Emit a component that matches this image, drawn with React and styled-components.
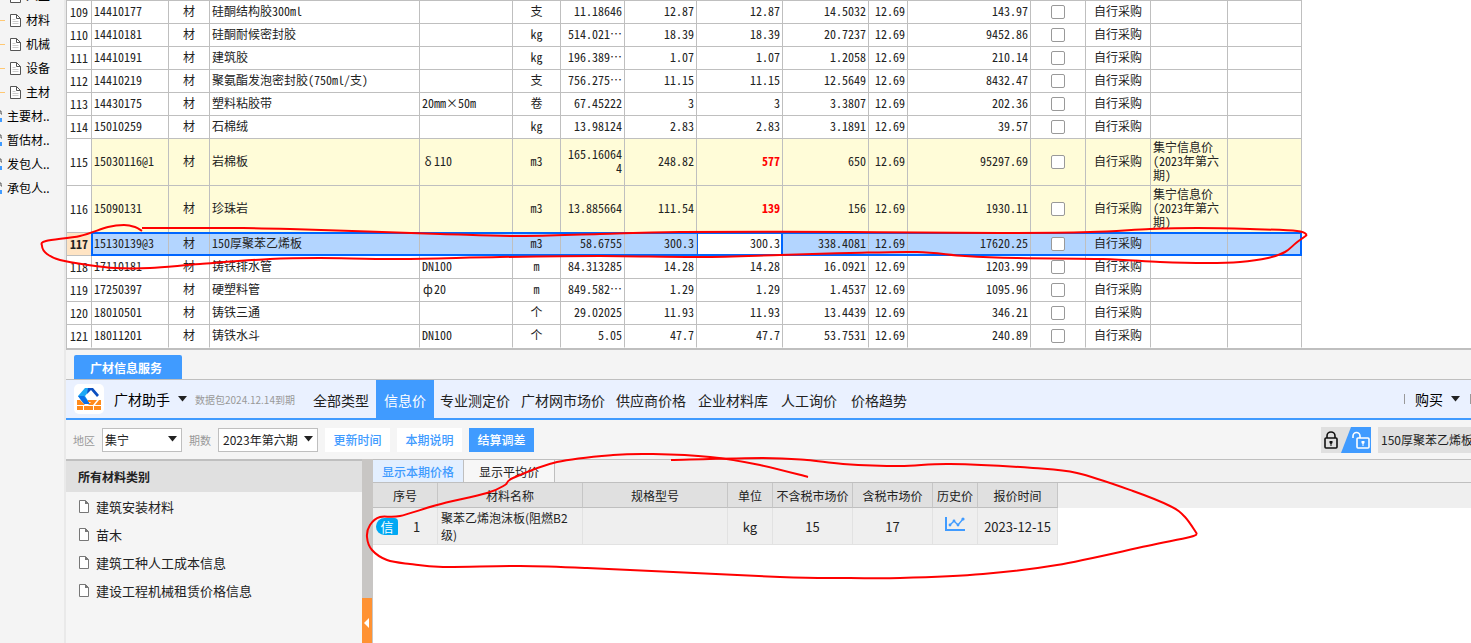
import { useState } from 'react'
import styled, { createGlobalStyle, css } from 'styled-components'

const GlobalStyle = createGlobalStyle`
* {
  box-sizing: border-box;
}
body {
  margin: 0;
  overflow: hidden;
  background: #fff;
  color: #222;
  font-family: 'Noto Sans CJK SC', sans-serif;
  font-size: 12px;
}
button, input, select {
  font: inherit;
  color: inherit;
}
`

const Page = styled.div`
  position: relative;
  display: flex;
  height: 100vh;
  overflow: hidden;
`

/* ---- left tree ---- */

const Sidebar = styled.nav`
  flex: 0 0 66px;
  overflow: hidden;
  background: #f4f4f4;
  border-right: 2px solid #e9e9e9;
`
const TreeList = styled.ul`
  list-style: none;
  margin: -16px 0 0;
  padding: 0;
`
const TreeItem = styled.li`
  display: flex;
  align-items: center;
  height: 24px;
  white-space: nowrap;
  color: #000;
`
const Branch = styled.span`
  width: 5px;
  height: 1px;
  margin-right: 5px;
  background: #ffc873;
`
const TreeLabel = styled.span`
  padding-left: ${props => props.$nested ? '5px' : '4px'};
  line-height: 24px;
`

/* ---- quantity sheet ---- */

const Main = styled.main`
  flex: 1;
  min-width: 0;
  display: flex;
  flex-direction: column;
`
const SheetPane = styled.section`
  overflow: hidden;
  border-bottom: 2px solid #bfbfbf;
`
const Sheet = styled.table`
  width: 1236px;
  table-layout: fixed;
  border-collapse: separate;
  border-spacing: 0;
  border-top: 1px solid #bfbfbf;
  border-left: 1px solid #bfbfbf;
  font-family: 'Noto Sans Mono CJK SC', 'Noto Sans CJK SC', monospace;
  line-height: 14px;
`
const selectedRow = css`
  position: relative;
  background: #b3d5ff;

  &::after {
    content: '';
    position: absolute;
    inset: -1px 0 0 24px;
    border: 2px solid #0066ff;
    pointer-events: none;
  }
`
const SheetRow = styled.tr`
  height: ${props => props.$tall ? '47px' : '23px'};
  background: ${props => props.$tall ? '#fffcd8' : '#fff'};
  ${props => props.$selected && selectedRow}

  &:last-child > * {
    border-bottom-color: transparent;
  }
`
const RowNumber = styled.th`
  padding: 0;
  border-right: 1px solid #bfbfbf;
  border-bottom: 1px solid #bfbfbf;
  background: ${props => props.$selected ? '#ffe4c4' : '#fff'};
  font-weight: ${props => props.$selected ? 'bold' : 'normal'};
`
const Cell = styled.td`
  padding: 0 2px 2px;
  border-right: 1px solid #bfbfbf;
  border-bottom: 1px solid #bfbfbf;
  text-align: ${props => props.$align || 'left'};
  word-break: ${props => props.$breakAll ? 'break-all' : 'normal'};
  ${props => props.$changed && css`
    color: #f00;
    font-weight: bold;
  `}
  ${props => props.$editing && css`
    background: #fff;
    border-right-color: #0066ff;
    box-shadow: inset 1px 0 #0066ff, inset -1px 0 #0066ff;
  `}
`
const WideGlyph = styled.span`
  display: inline-block;
  width: 12px;
  text-align: center;
`
const Tick = styled.input`
  appearance: none;
  display: block;
  width: 14px;
  height: 14px;
  margin: 2px auto 0;
  border: 1px solid #999;
  border-radius: 2px;
  background: #fff;

  &:checked {
    background: #409bff;
  }
`

/* ---- information service ---- */

const ServiceTabs = styled.div`
  display: flex;
  padding: 5px 8px 0;
  background: #f4f4f4;
  border-bottom: 1px solid #bfbfbf;
`
const ServiceTab = styled.button`
  width: 108px;
  height: 24px;
  padding: 0 4px 0 0;
  border: none;
  border-radius: 2px 2px 0 0;
  background: #409bff;
  color: #fff;
  font-weight: bold;
`
const HelperBar = styled.header`
  display: flex;
  align-items: center;
  height: 40px;
  flex-shrink: 0;
  padding-left: 8px;
  background: #eaf1ff;
  border-bottom: 2px solid #409bff;
  white-space: nowrap;
`
const LogoBox = styled.span`
  display: flex;
  width: 30px;
  height: 30px;
  margin-right: 10px;
  border-radius: 5px;
  background: #fff;
`
const MenuButton = styled.button`
  display: flex;
  align-items: center;
  gap: 8px;
  padding: 0;
  border: none;
  background: none;
  color: #000;
  font-size: 14px;
`
const Expiry = styled.span`
  margin: 0 11px 0 8px;
  color: #999;
  font-size: 10px;
`
const NavItem = styled.a`
  width: ${props => props.$chars * 12 + 22}px;
  height: 38px;
  line-height: 41px;
  text-align: center;
  text-decoration: none;
  font-size: 14px;
  color: ${props => props.$active ? '#fff' : '#222'};
  background: ${props => props.$active ? '#409bff' : 'transparent'};
`
const BuyArea = styled.div`
  display: flex;
  align-items: center;
  gap: 10px;
  margin-left: auto;
`
const Separator = styled.span`
  width: 1px;
  height: 10px;
  background: #999;
`

const FilterBar = styled.form`
  display: flex;
  align-items: center;
  height: 39px;
  flex-shrink: 0;
  padding-left: 7px;
  overflow: hidden;
  background: #f5f5f5;
  white-space: nowrap;
`
const FilterLabel = styled.label`
  display: flex;
  align-items: center;
  gap: 7px;
  margin-right: 7px;
  color: #999;
  font-size: 11px;
`
const SelectBox = styled.span`
  position: relative;
  width: ${props => props.$wide ? '100px' : '80px'};
  color: #222;
  font-size: 12px;

  svg {
    position: absolute;
    top: 8px;
    right: 5px;
    pointer-events: none;
  }
`
const Select = styled.select`
  appearance: none;
  display: block;
  width: 100%;
  height: 24px;
  padding: 0 0 0 ${props => props.$wide ? '4px' : '2px'};
  border: 1px solid #bfbfbf;
  border-radius: 0;
  background: #fff;
`
const FilterButton = styled.button`
  width: 65px;
  height: 24px;
  margin-right: 7px;
  padding: 0;
  border: none;
  background: ${props => props.$primary ? '#409bff' : '#fff'};
  color: ${props => props.$primary ? '#fff' : '#409bff'};
  font-weight: 500;
`
const SearchArea = styled.div`
  display: flex;
  gap: 7px;
  margin-left: auto;
`
const LockToggle = styled.button`
  display: flex;
  padding: 0;
  border: none;
  background: #e0e0e0;
`
const SearchInput = styled.input`
  width: 93px;
  height: 26px;
  padding: 0 0 0 3px;
  border: none;
  background: #e0e0e0;
`

const Body = styled.div`
  flex: 1;
  min-height: 0;
  display: flex;
`
const Categories = styled.aside`
  flex: 0 0 296px;
  background: #f5f5f5;
  border-top: 2px solid #bfbfbf;
`
const CategoryTitle = styled.h2`
  margin: 0;
  padding-left: 12px;
  background: #e0e0e0;
  font-size: 12px;
  line-height: 31px;
`
const CategoryList = styled.ul`
  list-style: none;
  margin: 0;
  padding: 0 0 0 12px;
`
const Category = styled.li`
  display: flex;
  align-items: center;
  gap: 6px;
  height: 28px;
  font-size: 13px;
`
const Splitter = styled.div`
  flex: 0 0 11px;
  display: flex;
  flex-direction: column;
  justify-content: flex-end;
  background: #c8c6c4;
`
const CollapseButton = styled.button`
  display: flex;
  align-items: center;
  width: 10px;
  height: 45px;
  padding: 5px 0 0 2px;
  border: none;
  background: #ff9233;
`

const Results = styled.section`
  flex: 1;
  min-width: 0;
  border-top: 1px solid #bfbfbf;
`
const PriceTabs = styled.div`
  display: flex;
  background: #f1f1f1;
  border-bottom: 1px solid #bfbfbf;
`
const PriceTab = styled.button`
  width: 91px;
  height: 22px;
  padding: 0;
  border: none;
  border-right: 1px solid #bfbfbf;
  background: ${props => props.$active ? '#e3efff' : '#f7f7f7'};
  color: ${props => props.$active ? '#409bff' : '#222'};
  font-weight: ${props => props.$active ? 500 : 400};
`
const PriceTableWrap = styled.div`
  background: linear-gradient(#efefef 25px, #fff 25px);
`
const PriceTable = styled.table`
  width: 685px;
  table-layout: fixed;
  border-collapse: separate;
  border-spacing: 0;
  line-height: 17px;

  th {
    height: 25px;
    padding: 0;
    background: #e0e0e0;
    border-right: 1px solid #c6c6c6;
    border-bottom: 1px solid #bfbfbf;
    font-weight: normal;
    white-space: nowrap;
  }
  td {
    height: 37px;
    padding: 0;
    background: #efefef;
    border-right: 1px solid #e2e2e2;
    border-bottom: 1px solid #e2e2e2;
    font-size: 13px;
    text-align: center;
  }
  td.name {
    padding-left: 3px;
    font-size: 12px;
    text-align: left;
  }
`
const IndexCell = styled.div`
  display: flex;
  align-items: center;
  gap: 15px;
  padding-left: 3px;
`
const SourceBadge = styled.span`
  width: 22px;
  height: 17px;
  border-radius: 9px 4px 1px 9px;
  background: #00a8f3;
  color: #fff;
`

const Annotations = styled.svg`
  position: absolute;
  top: 0;
  left: 0;
  pointer-events: none;
`

/* ---- data ---- */

const columns = [25, 77, 41, 210, 93, 48, 64, 72, 86, 86, 39, 123, 55, 65, 77, 74]

const source = '集宁信息价(2023年第六期)'

const materials = [
  { no: 109, code: '14410177', name: '硅酮结构胶300ml', spec: '', unit: '支', qty: '11.18646', budget: '12.87', market: '12.87', taxed: '14.5032', total: '143.97' },
  { no: 110, code: '14410181', name: '硅酮耐候密封胶', spec: '', unit: 'kg', qty: '514.021…', budget: '18.39', market: '18.39', taxed: '20.7237', total: '9452.86' },
  { no: 111, code: '14410191', name: '建筑胶', spec: '', unit: 'kg', qty: '196.389…', budget: '1.07', market: '1.07', taxed: '1.2058', total: '210.14' },
  { no: 112, code: '14410219', name: '聚氨酯发泡密封胶(750ml/支)', spec: '', unit: '支', qty: '756.275…', budget: '11.15', market: '11.15', taxed: '12.5649', total: '8432.47' },
  { no: 113, code: '14430175', name: '塑料粘胶带', spec: '20mm×50m', unit: '卷', qty: '67.45222', budget: '3', market: '3', taxed: '3.3807', total: '202.36' },
  { no: 114, code: '15010259', name: '石棉绒', spec: '', unit: 'kg', qty: '13.98124', budget: '2.83', market: '2.83', taxed: '3.1891', total: '39.57' },
  { no: 115, code: '15030116@1', name: '岩棉板', symbol: 'δ', spec: '110', unit: 'm3', qty: '165.160644', budget: '248.82', market: '577', taxed: '650', total: '95297.69', source },
  { no: 116, code: '15090131', name: '珍珠岩', spec: '', unit: 'm3', qty: '13.885664', budget: '111.54', market: '139', taxed: '156', total: '1930.11', source },
  { no: 117, code: '15130139@3', name: '150厚聚苯乙烯板', spec: '', unit: 'm3', qty: '58.6755', budget: '300.3', market: '300.3', taxed: '338.4081', total: '17620.25', selected: true },
  { no: 118, code: '17110181', name: '铸铁排水管', spec: 'DN100', unit: 'm', qty: '84.313285', budget: '14.28', market: '14.28', taxed: '16.0921', total: '1203.99' },
  { no: 119, code: '17250397', name: '硬塑料管', symbol: 'ф', spec: '20', unit: 'm', qty: '849.582…', budget: '1.29', market: '1.29', taxed: '1.4537', total: '1095.96' },
  { no: 120, code: '18010501', name: '铸铁三通', spec: '', unit: '个', qty: '29.02025', budget: '11.93', market: '11.93', taxed: '13.4439', total: '346.21' },
  { no: 121, code: '18011201', name: '铸铁水斗', spec: 'DN100', unit: '个', qty: '5.05', budget: '47.7', market: '47.7', taxed: '53.7531', total: '240.89' },
]

const tree = [
  { label: '人工', nested: true },
  { label: '材料', nested: true },
  { label: '机械', nested: true },
  { label: '设备', nested: true },
  { label: '主材', nested: true },
  { label: '主要材..' },
  { label: '暂估材..' },
  { label: '发包人..' },
  { label: '承包人..' },
]

const navItems = ['全部类型', '信息价', '专业测定价', '广材网市场价', '供应商价格', '企业材料库', '人工询价', '价格趋势']

const categories = ['建筑安装材料', '苗木', '建筑工种人工成本信息', '建设工程机械租赁价格信息']

const priceColumns = [
  ['序号', 65],
  ['材料名称', 145],
  ['规格型号', 145],
  ['单位', 45],
  ['不含税市场价', 80],
  ['含税市场价', 80],
  ['历史价', 45],
  ['报价时间', 80],
]

// freehand marks, as lists of points
const marks = [
  [[142, 231], [135, 227], [124, 225], [108, 227], [80, 236], [46, 241], [42, 246], [47, 254], [60, 260], [88, 265], [115, 268], [150, 268], [200, 264], [270, 259], [320, 258], [400, 259], [500, 257], [600, 256], [700, 257], [780, 255], [850, 253], [917, 252], [965, 256], [1017, 258], [1103, 259], [1160, 262], [1207, 263], [1240, 262], [1268, 258], [1285, 252], [1296, 243], [1307, 235]],
  [[142, 228], [233, 228], [290, 229], [440, 234], [520, 236], [600, 234], [680, 232], [850, 232], [1000, 233], [1090, 232], [1150, 229], [1197, 228], [1250, 229], [1297, 231], [1307, 235]],
  [[808, 477], [760, 465], [710, 457], [653, 454], [613, 455], [557, 462], [513, 478], [505, 485], [487, 493], [437, 505], [400, 516], [380, 517], [370, 525], [367, 537], [372, 550], [387, 560], [410, 564], [443, 567], [520, 566], [587, 568], [780, 577], [850, 578], [900, 578], [983, 574], [1057, 565], [1147, 546], [1190, 537], [1197, 534]],
  [[671, 460], [763, 458], [807, 460], [843, 464], [900, 466], [950, 464], [1033, 468], [1077, 473], [1133, 491], [1170, 506], [1185, 517], [1197, 534]],
]

const smoothPath = (points) => {
  let d = `M${points[0].join(' ')}`
  for (let i = 0; i < points.length - 1; i++) {
    const p0 = points[i - 1] || points[i]
    const p1 = points[i]
    const p2 = points[i + 1]
    const p3 = points[i + 2] || p2
    d += `C${p1[0] + (p2[0] - p0[0]) / 6} ${p1[1] + (p2[1] - p0[1]) / 6} ${p2[0] - (p3[0] - p1[0]) / 6} ${p2[1] - (p3[1] - p1[1]) / 6} ${p2[0]} ${p2[1]}`
  }
  return d
}

/* ---- icons ---- */

const Caret = () => (
  <svg width="9" height="6" viewBox="0 0 9 6"><path d="M0 0h9L4.5 5.500z" fill="#222" /></svg>
)

const TreePage = () => (
  <svg width="11" height="13" viewBox="0 0 11 13">
    <path d="M.5.5h6l4 4v8H.5z" fill="#fff" stroke="#555" />
    <path d="M6.500.5v4h4" fill="none" stroke="#555" />
    <path d="M2.500 5.500h3M2.500 7.500h6M2.500 9.500h6" stroke="#ccc" />
  </svg>
)

const TreeGroup = () => (
  <svg width="3" height="13" viewBox="0 0 3 13">
    <path d="M0 1h1v3h1" fill="none" stroke="#555" />
    <path d="M0 8h2v4H0z" fill="#409bff" />
  </svg>
)

const PageIcon = () => (
  <svg width="12" height="13" viewBox="0 0 12 13">
    <path d="M1.500.5h6l3 3v9h-9z" fill="#fff" stroke="#777" />
    <path d="M7 0v4h4z" fill="#777" />
  </svg>
)

const Logo = () => (
  <svg width="30" height="30" viewBox="0 0 30 30">
    <path d="M11 4h7l-7 8 5 8h-6l-6-8z" fill="#1ba7f5" />
    <path d="M4 12h6l6 8h-6z" fill="#0a6fe8" />
    <path d="M14 4h5l6 7-2 2-6-7-4 4z" fill="#0b4fc0" />
    <path d="M3 16h3l5 5H3zM14 21l3-3h-3v-2h9l-4 5zM21 21l4-5h2v5zM3 22h6v4H3zM10 22h9v4h-9zM20 22h7v4h-7z" fill="#ff8a1c" />
  </svg>
)

const Locks = () => (
  <svg width="50" height="26" viewBox="0 0 50 26">
    <path d="M20 26L30 0h20v26z" fill="#409bff" />
    <g fill="none" stroke="#111" strokeWidth="1.600">
      <rect x="4" y="11" width="12" height="10" rx="1" />
      <path d="M6 11V9a4 4 0 0 1 8 0v2" />
    </g>
    <path d="M8.500 14h3v2l-1 1v2h-1v-2l-1-1z" fill="#111" />
    <g fill="none" stroke="#fff" strokeWidth="1.600">
      <rect x="36" y="11" width="12" height="10" rx="1" />
      <path d="M32 11V9a3.500 3.500 0 0 1 7 0v2" />
    </g>
    <path d="M40.500 14h3v2l-1 1v2h-1v-2l-1-1z" fill="#fff" />
  </svg>
)

const TrendIcon = () => (
  <svg width="20" height="15" viewBox="0 0 20 15">
    <path d="M1 0v13h19" fill="none" stroke="#409bff" strokeWidth="2" />
    <path d="M5 8l4-4 4 4 5-6" fill="none" stroke="#409bff" strokeWidth="1.300" />
    <g fill="#409bff">
      <circle cx="5" cy="8" r="1.400" />
      <circle cx="9" cy="4" r="1.400" />
      <circle cx="13" cy="8" r="1.400" />
      <circle cx="18" cy="2" r="1.600" />
    </g>
  </svg>
)

const MaterialRow = ({ item }) => {
  const changed = Boolean(item.source)

  return (
    <SheetRow $tall={changed} $selected={item.selected}>
      <RowNumber scope="row" $selected={item.selected}>{item.no}</RowNumber>
      <Cell>{item.code}</Cell>
      <Cell $align="center">材</Cell>
      <Cell>{item.name}</Cell>
      <Cell>
        {item.symbol && <WideGlyph>{item.symbol}</WideGlyph>}
        {item.spec}
      </Cell>
      <Cell $align="center">{item.unit}</Cell>
      <Cell $align="right" $breakAll>{item.qty}</Cell>
      <Cell $align="right">{item.budget}</Cell>
      <Cell $align="right" $changed={changed} $editing={item.selected}>{item.market}</Cell>
      <Cell $align="right">{item.taxed}</Cell>
      <Cell $align="right">12.69</Cell>
      <Cell $align="right">{item.total}</Cell>
      <Cell><Tick type="checkbox" aria-label={item.name} /></Cell>
      <Cell $align="center">自行采购</Cell>
      <Cell>{item.source}</Cell>
      <Cell />
    </SheetRow>
  )
}

const App = () => {
  const [activeNav, setActiveNav] = useState('信息价')
  const [keyword, setKeyword] = useState('150厚聚苯乙烯板')

  return (
    <Page>
      <GlobalStyle />

      <Sidebar>
        <TreeList>
          {tree.map(({ label, nested }) => (
            <TreeItem key={label}>
              {nested ? <><Branch /><TreePage /></> : <TreeGroup />}
              <TreeLabel $nested={nested}>{label}</TreeLabel>
            </TreeItem>
          ))}
        </TreeList>
      </Sidebar>

      <Main>
        <SheetPane>
          <Sheet>
            <colgroup>
              {columns.map((width, i) => <col key={i} style={{ width }} />)}
            </colgroup>
            <tbody>
              {materials.map(item => <MaterialRow key={item.no} item={item} />)}
            </tbody>
          </Sheet>
        </SheetPane>

        <ServiceTabs>
          <ServiceTab type="button">广材信息服务</ServiceTab>
        </ServiceTabs>

        <HelperBar>
          <LogoBox><Logo /></LogoBox>
          <MenuButton type="button">广材助手 <Caret /></MenuButton>
          <Expiry>数据包2024.12.14到期</Expiry>
          {navItems.map(label => (
            <NavItem
              key={label}
              href="#"
              $chars={label.length}
              $active={label === activeNav}
              onClick={() => setActiveNav(label)}
            >
              {label}
            </NavItem>
          ))}
          <BuyArea>
            <Separator />
            <MenuButton type="button">购买 <Caret /></MenuButton>
            <Separator />
          </BuyArea>
        </HelperBar>

        <FilterBar onSubmit={e => e.preventDefault()}>
          <FilterLabel>
            地区
            <SelectBox>
              <Select><option>集宁</option></Select>
              <Caret />
            </SelectBox>
          </FilterLabel>
          <FilterLabel>
            期数
            <SelectBox $wide>
              <Select $wide><option>2023年第六期</option></Select>
              <Caret />
            </SelectBox>
          </FilterLabel>
          <FilterButton type="button">更新时间</FilterButton>
          <FilterButton type="button">本期说明</FilterButton>
          <FilterButton type="button" $primary>结算调差</FilterButton>
          <SearchArea>
            <LockToggle type="button" aria-label="锁定"><Locks /></LockToggle>
            <SearchInput aria-label="搜索" value={keyword} onChange={e => setKeyword(e.target.value)} />
          </SearchArea>
        </FilterBar>

        <Body>
          <Categories>
            <CategoryTitle>所有材料类别</CategoryTitle>
            <CategoryList>
              {categories.map(label => (
                <Category key={label}><PageIcon />{label}</Category>
              ))}
            </CategoryList>
          </Categories>
          <Splitter>
            <CollapseButton type="button" aria-label="收起">
              <svg width="6" height="10" viewBox="0 0 6 10"><path d="M5 0v10L0 5z" fill="#fff" /></svg>
            </CollapseButton>
          </Splitter>

          <Results>
            <PriceTabs>
              <PriceTab type="button" $active>显示本期价格</PriceTab>
              <PriceTab type="button">显示平均价</PriceTab>
            </PriceTabs>
            <PriceTableWrap>
              <PriceTable>
                <colgroup>
                  {priceColumns.map(([label, width]) => <col key={label} style={{ width }} />)}
                </colgroup>
                <thead>
                  <tr>{priceColumns.map(([label]) => <th key={label} scope="col">{label}</th>)}</tr>
                </thead>
                <tbody>
                  <tr>
                    <td><IndexCell><SourceBadge>信</SourceBadge>1</IndexCell></td>
                    <td className="name">聚苯乙烯泡沫板(阻燃B2级)</td>
                    <td />
                    <td>kg</td>
                    <td>15</td>
                    <td>17</td>
                    <td><TrendIcon /></td>
                    <td>2023-12-15</td>
                  </tr>
                </tbody>
              </PriceTable>
            </PriceTableWrap>
          </Results>
        </Body>
      </Main>

      <Annotations width="1471" height="643" viewBox="0 0 1471 643" fill="none" stroke="#f00" strokeWidth="2">
        {marks.map((points, i) => <path key={i} d={smoothPath(points)} />)}
      </Annotations>
    </Page>
  )
}

export default App
